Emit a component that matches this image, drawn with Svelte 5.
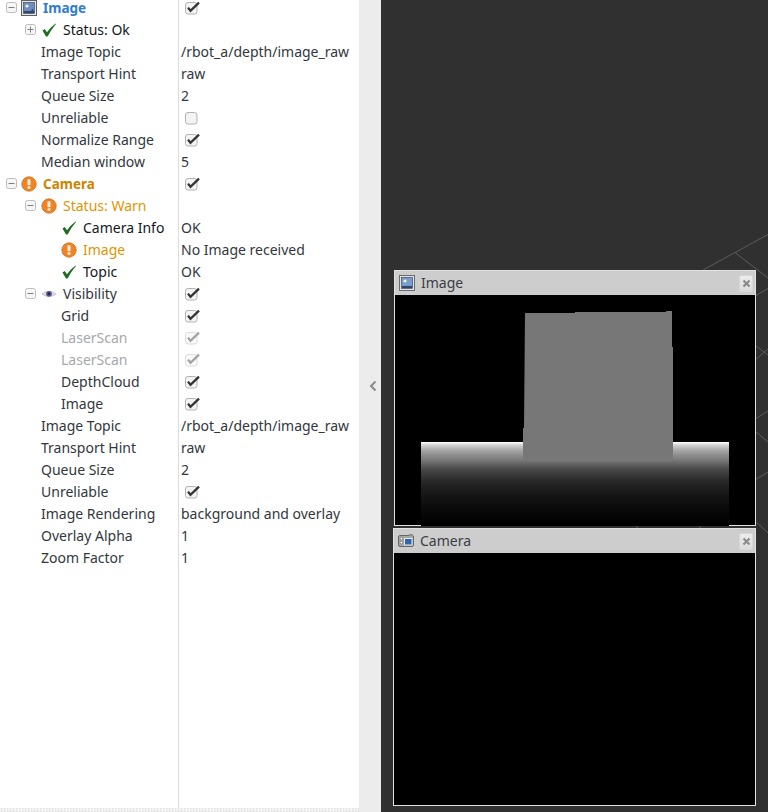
<script>
  const rows = [
    { label: 'Image', indent: 43, cls: 'blue bold', icon: 'image', toggle: 'minus', tx: 6, check: 'on' },
    { label: 'Status: Ok', indent: 63, cls: 'dark', icon: 'ok', iconX: 41, toggle: 'plus', tx: 25 },
    { label: 'Image Topic', indent: 41, value: '/rbot_a/depth/image_raw' },
    { label: 'Transport Hint', indent: 41, value: 'raw' },
    { label: 'Queue Size', indent: 41, value: '2' },
    { label: 'Unreliable', indent: 41, check: 'off' },
    { label: 'Normalize Range', indent: 41, check: 'on' },
    { label: 'Median window', indent: 41, value: '5' },
    { label: 'Camera', indent: 43, cls: 'orange bold', icon: 'warn', iconX: 21, toggle: 'minus', tx: 6, check: 'on' },
    { label: 'Status: Warn', indent: 63, cls: 'amber', icon: 'warn', iconX: 41, toggle: 'minus', tx: 25 },
    { label: 'Camera Info', indent: 83, cls: 'dark', icon: 'ok', iconX: 61, value: 'OK' },
    { label: 'Image', indent: 83, cls: 'amber', icon: 'warn', iconX: 61, value: 'No Image received' },
    { label: 'Topic', indent: 83, cls: 'dark', icon: 'ok', iconX: 61, value: 'OK' },
    { label: 'Visibility', indent: 63, icon: 'eye', iconX: 41, toggle: 'minus', tx: 25, check: 'on' },
    { label: 'Grid', indent: 61, check: 'on' },
    { label: 'LaserScan', indent: 61, cls: 'muted', check: 'dim' },
    { label: 'LaserScan', indent: 61, cls: 'muted', check: 'dim' },
    { label: 'DepthCloud', indent: 61, check: 'on' },
    { label: 'Image', indent: 61, check: 'on' },
    { label: 'Image Topic', indent: 41, value: '/rbot_a/depth/image_raw' },
    { label: 'Transport Hint', indent: 41, value: 'raw' },
    { label: 'Queue Size', indent: 41, value: '2' },
    { label: 'Unreliable', indent: 41, check: 'on' },
    { label: 'Image Rendering', indent: 41, value: 'background and overlay' },
    { label: 'Overlay Alpha', indent: 41, value: '1' },
    { label: 'Zoom Factor', indent: 41, value: '1' }
  ];
</script>

{#snippet icon(kind)}
  {#if kind === 'ok'}
    <svg width="16" height="16" viewBox="0 0 16 16"><path d="M1.500 8.600 L3.700 7 L6 10.200 Q9 5.500 14.600 1.400 L15 2 Q10.200 7.500 6.600 14.400 L5 14.400 Z" fill="#1f6e1f" /></svg>
  {:else if kind === 'warn'}
    <svg width="16" height="16" viewBox="0 0 16 16">
      <circle cx="8" cy="8" r="7.200" fill="#ee8426" stroke="#cf6d14" stroke-width="0.8" />
      <rect x="6.500" y="3.200" width="3" height="6" rx="0.8" fill="#fdeedd" />
      <rect x="6.500" y="10.200" width="3" height="2.600" rx="0.8" fill="#fdeedd" />
    </svg>
  {:else if kind === 'eye'}
    <svg width="16" height="16" viewBox="0 0 16 16">
      <path d="M1 8 Q8 2.600 15 8 Q8 13 1 8 Z" fill="#dfdfe6" stroke="#a9a9b2" stroke-width="0.6" />
      <circle cx="8" cy="7.800" r="2.900" fill="#53598f" />
      <circle cx="8" cy="7.800" r="1.200" fill="#1d2040" />
    </svg>
  {:else if kind === 'image'}
    <svg width="16" height="16" viewBox="0 0 16 16">
      <rect x="0.500" y="0.500" width="15" height="15" fill="#e6e6e6" stroke="#5f5f62" />
      <rect x="2.500" y="2.500" width="11" height="11" fill="#6d8fc0" stroke="#2d3a55" stroke-width="0.6" />
      <circle cx="6" cy="6" r="1.600" fill="#eef2d8" />
      <path d="M3 11 H13 V13 H3 Z" fill="#32456b" />
      <path d="M10 11 L11.500 8.500 L12.500 11 Z" fill="#32456b" />
    </svg>
  {/if}
{/snippet}

{#snippet toggle(kind)}
  <svg width="11" height="11" viewBox="0 0 11 11">
    <rect x="0.500" y="0.500" width="10" height="10" rx="2" fill="#f6f6f6" stroke="#bcbcbc" />
    <path d="M2.500 5.500 H8.500" stroke="#808080" />
    {#if kind === 'plus'}<path d="M5.500 2.500 V8.500" stroke="#808080" />{/if}
  </svg>
{/snippet}

{#snippet checkbox(kind)}
  <svg width="16" height="14" viewBox="0 0 16 14" class:dim={kind === 'dim'}>
    <rect x="0.500" y="1.500" width="11.500" height="11.500" rx="2.500" fill="#f4f4f4" stroke="#b2b2b2" />
    {#if kind !== 'off'}
      <path d="M3 6.600 L5.500 9.800 L14 1.600" fill="none" stroke="#333" stroke-width="2.300" />
    {/if}
  </svg>
{/snippet}

{#snippet closeButton()}
  <span class="close">
    <svg width="9" height="9" viewBox="0 0 9 9"><path d="M1.500 1.500 L7.500 7.500 M7.500 1.500 L1.500 7.500" stroke="#8b8b8b" stroke-width="2.200" /></svg>
  </span>
{/snippet}

<div class="app">
  <aside class="panel">
    <div class="tree">
      {#each rows as r}
        <div class="row">
          {#if r.toggle}<span class="toggle-slot" style="left:{r.tx}px">{@render toggle(r.toggle)}</span>{/if}
          {#if r.icon}<span class="icon-slot" style="left:{r.iconX ?? 21}px">{@render icon(r.icon)}</span>{/if}
          <span class="label {r.cls ?? ''}" style="left:{r.indent}px">{r.label}</span>
          {#if r.value}<span class="value">{r.value}</span>{/if}
          {#if r.check}<span class="check-slot">{@render checkbox(r.check)}</span>{/if}
        </div>
      {/each}
    </div>
    <div class="divider"></div>
    <div class="strip"></div>
  </aside>

  <div class="splitter">
    <svg width="8" height="12" viewBox="0 0 8 12"><path d="M6.500 1.500 L2 6 L6.500 10.500" fill="none" stroke="#8a8a8a" stroke-width="2" /></svg>
  </div>

  <main class="scene">
    <svg class="grid" width="387" height="812" viewBox="381 0 387 812">
      <g stroke="#5c5c5c" stroke-width="1" fill="none">
        <path d="M703 270 L768 234.500" />
        <path d="M735 252.500 L768 278" />
        <path d="M755 296 L768 288.500" />
        <path d="M755 345 L768 355" />
        <path d="M755 360 L768 349" />
        <path d="M755 419 L768 411" />
        <path d="M755 431 L768 442" />
        <path d="M755 480 L768 472" />
        <path d="M752 518 L768 533" />
        <path d="M636 526 L638 528" />
        <path d="M699 528 L701 526" />
      </g>
    </svg>

    <section class="win image-win">
      <header>
        <svg width="16" height="16" viewBox="0 0 16 16">
          <rect x="0.500" y="0.500" width="15" height="15" fill="#e4e4e4" stroke="#6a6a6a" />
          <rect x="2.500" y="2.500" width="11" height="11" fill="#7a9ccb" stroke="#2d3a55" stroke-width="0.6" />
          <circle cx="6" cy="6" r="1.600" fill="#eef2d8" />
          <path d="M3 11 H13 V13 H3 Z" fill="#32456b" />
        </svg>
        <span class="title">Image</span>
        {@render closeButton()}
      </header>
      <div class="view">
        <div class="floor"></div>
        <svg class="box" width="151" height="151" viewBox="0 0 151 151"><path d="M2 3 H52 V2 H143 V1 H149 V37 H150 V151 H0 V118 H1 Z" fill="#777" /></svg>
      </div>
    </section>

    <section class="win camera-win">
      <header>
        <svg width="16" height="16" viewBox="0 0 16 16">
          <rect x="0.500" y="2.500" width="15" height="11" rx="1.500" fill="#a9a9a6" stroke="#666" />
          <rect x="11" y="1" width="4" height="2" fill="#8e8e8c" />
          <rect x="6.500" y="5.500" width="7.500" height="6.500" fill="#2f66b4" stroke="#e6e6e6" />
          <circle cx="3.400" cy="5.600" r="1.300" fill="#fff" stroke="#444" stroke-width="0.5" />
          <circle cx="3.400" cy="9.600" r="1.300" fill="#fff" stroke="#444" stroke-width="0.5" />
        </svg>
        <span class="title">Camera</span>
        {@render closeButton()}
      </header>
      <div class="view"></div>
    </section>
  </main>
</div>

<style>
  :global(body) {
    margin: 0;
    background: #303030;
  }

  .app {
    display: flex;
    width: 768px;
    height: 812px;
    overflow: hidden;
    font-family: "Noto Sans", sans-serif;
    font-size: 14px;
    color: #32373d;
  }

  .panel {
    position: relative;
    width: 359px;
    flex: none;
    background: #fff;
  }

  .tree {
    margin-top: -3px;
  }

  .row {
    position: relative;
    height: 22px;
    white-space: nowrap;
  }

  .label, .value, .toggle-slot, .icon-slot, .check-slot {
    position: absolute;
  }

  .label, .value {
    top: 3px;
    line-height: 16px;
  }

  .value {
    left: 181px;
  }

  .toggle-slot {
    top: 5px;
    line-height: 0;
  }

  .icon-slot {
    top: 3px;
    line-height: 0;
  }

  .check-slot {
    left: 185px;
    top: 4px;
    line-height: 0;
  }

  .bold { font-weight: 700; font-size: 13.5px; }
  .blue { color: #2f7bd0; }
  .orange { color: #cc8400; }
  .amber { color: #e09400; }
  .dark { color: #14181c; }
  .muted { color: #a6a8ab; }

  .dim { opacity: 0.45; }

  .divider {
    position: absolute;
    left: 178px;
    top: 0;
    bottom: 4px;
    width: 1px;
    background: #dcdcdc;
  }

  .strip {
    position: absolute;
    left: 0;
    right: 0;
    bottom: 0;
    height: 4px;
    background: repeating-conic-gradient(#e6e6e6 0 25%, #f8f8f8 0 50%) 0 0 / 3px 3px;
  }

  .splitter {
    width: 22px;
    flex: none;
    background: #ececec;
    position: relative;
  }

  .splitter svg {
    position: absolute;
    left: 10px;
    top: 380px;
  }

  .scene {
    position: relative;
    flex: 1;
    background: #303030;
  }

  .grid {
    position: absolute;
    inset: 0;
  }

  .win {
    position: absolute;
    display: flex;
    flex-direction: column;
    box-sizing: border-box;
    border: 1px solid #e2e2e2;
    background: #000;
  }

  .win header {
    display: flex;
    align-items: center;
    gap: 6px;
    height: 24px;
    flex: none;
    padding: 0 2px 0 4px;
    background: #cdcdcd;
    color: #3a3f45;
  }

  .title {
    flex: 1;
    margin-top: -2px;
  }

  .close {
    box-sizing: border-box;
    width: 14px;
    height: 17px;
    display: flex;
    align-items: center;
    justify-content: center;
    background: linear-gradient(#ececec, #dcdcdc);
    border: 1px solid #d8d8d8;
    border-radius: 2px;
  }

  .view {
    position: relative;
    flex: 1;
    background: #000;
  }

  .image-win {
    left: 13px;
    top: 270px;
    width: 362px;
    height: 256px;
  }

  .camera-win {
    left: 12px;
    top: 528px;
    width: 363px;
    height: 278px;
  }

  .floor {
    position: absolute;
    left: 26px;
    top: 147px;
    width: 308px;
    height: 84px;
    background: linear-gradient(#fff 0, #cfcfcf 4%, #a6a6a6 10%, #8c8c8c 16%, #777 22%, #5a5a5a 28%, #444 34%, #2a2a2a 46%, #1a1a1a 58%, #101010 70%, #080808 82%, #000 100%);
  }

  .box {
    position: absolute;
    left: 128px;
    top: 15px;
  }
</style>
